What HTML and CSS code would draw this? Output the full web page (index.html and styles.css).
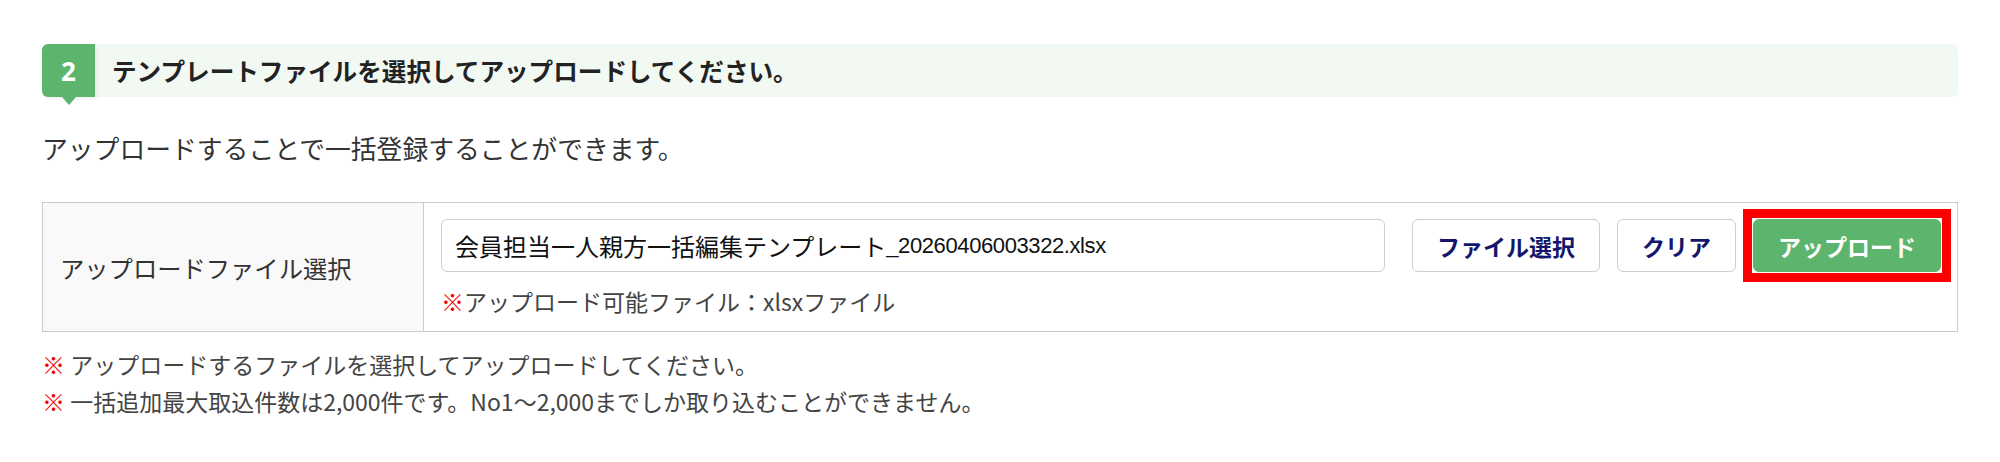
FILE: index.html
```html
<!DOCTYPE html>
<html lang="ja">
<head>
<meta charset="utf-8">
<title>テンプレートアップロード</title>
<link rel="stylesheet" href="styles.css">
</head>
<body>
<div class="page">
  <div class="step">
    <div class="step-num">2</div>
    <div class="step-title">テンプレートファイルを選択してアップロードしてください。</div>
  </div>

  <p class="lead">アップロードすることで一括登録することができます。</p>

  <div class="upload-table">
    <div class="label-cell">アップロードファイル選択</div>
    <div class="field-cell">
      <div class="field-row">
        <div class="file-name">会員担当一人親方一括編集テンプレート<span class="latin">_20260406003322.xlsx</span></div>
        <div class="btn-group">
          <button class="btn">ファイル選択</button>
          <button class="btn">クリア</button>
          <span class="highlight-frame"><button class="btn btn-success">アップロード</button></span>
        </div>
      </div>
      <div class="field-note"><span class="mark">※</span>アップロード可能ファイル：xlsxファイル</div>
    </div>
  </div>

  <ul class="notes">
    <li><span class="mark">※</span> アップロードするファイルを選択してアップロードしてください。</li>
    <li><span class="mark">※</span> 一括追加最大取込件数は2,000件です。No1～2,000までしか取り込むことができません。</li>
  </ul>
</div>
</body>
</html>
```

FILE: styles.css
```css
* { box-sizing: border-box; }

html, body {
  margin: 0;
  padding: 0;
  background: #ffffff;
}

body {
  font-family: "Noto Sans CJK JP", "Noto Sans", sans-serif;
  color: #333333;
}

.page {
  padding: 44px 42px 0 42px;
}

/* step header */
.step {
  display: flex;
  align-items: center;
  height: 53px;
  background: #f2f9f3;
  border-radius: 6px;
}

.step-num {
  position: relative;
  width: 53px;
  height: 53px;
  flex: 0 0 53px;
  display: flex;
  align-items: center;
  justify-content: center;
  background: #5db56d;
  color: #ffffff;
  font-family: "Noto Sans", "Liberation Sans", sans-serif;
  font-weight: 700;
  font-size: 26px;
  border-radius: 6px 0 0 6px;
  box-shadow: 2px 2px 4px rgba(0, 0, 0, 0.06);
}

.step-num::after {
  content: "";
  position: absolute;
  left: 50%;
  bottom: -8px;
  transform: translateX(-50%);
  border-left: 7px solid transparent;
  border-right: 7px solid transparent;
  border-top: 8px solid #5db56d;
}

.step-title {
  margin-left: 17px;
  font-size: 24.6px;
  font-weight: 700;
  color: #222222;
  line-height: 1;
}

/* lead */
.lead {
  margin: 33px 0 36px 0;
  font-size: 25.8px;
  line-height: 36px;
  color: #333333;
}

/* upload table */
.upload-table {
  display: grid;
  grid-template-columns: 381px 1fr;
  border: 1px solid #cccccc;
}

.label-cell {
  display: flex;
  align-items: center;
  padding-left: 17px;
  background: #f9f9f9;
  border-right: 1px solid #cccccc;
  font-size: 24.3px;
  color: #333333;
}

.field-cell {
  padding: 16px 16px 15px 17px;
  display: flex;
  flex-direction: column;
  gap: 14px;
}

.field-row {
  display: flex;
  align-items: center;
}

.file-name {
  flex: 1;
  height: 53px;
  display: flex;
  align-items: center;
  padding-left: 13px;
  border: 1px solid #cfcfcf;
  border-radius: 6px;
  font-size: 24px;
  color: #111111;
  white-space: nowrap;
  overflow: hidden;
}

.file-name .latin {
  font-family: "Liberation Sans", "Noto Sans", sans-serif;
  font-size: 22px;
  letter-spacing: -0.4px;
}

.btn-group {
  display: flex;
  align-items: center;
  gap: 17px;
  margin-left: 27px;
}

.btn {
  height: 53px;
  padding: 0 24px;
  border: 1px solid #cfcfcf;
  border-radius: 6px;
  background: #ffffff;
  color: #13166b;
  font-family: "Noto Sans CJK JP", sans-serif;
  font-weight: 700;
  font-size: 23px;
  cursor: pointer;
}

.highlight-frame {
  display: flex;
  margin: -10px -10px -10px -10px;
  padding: 1px;
  border: 9px solid #ff0000;
}

.btn-success {
  width: 188px;
  background: #5db56d;
  border-color: #5db56d;
  color: #ffffff;
}

.field-note {
  font-size: 23px;
  line-height: 30px;
  color: #444444;
}

.mark {
  color: #ee0000;
}

/* notes */
.notes {
  list-style: none;
  margin: 14px 0 0 0;
  padding: 0;
  font-size: 23px;
  line-height: 37px;
  color: #444444;
}
```
